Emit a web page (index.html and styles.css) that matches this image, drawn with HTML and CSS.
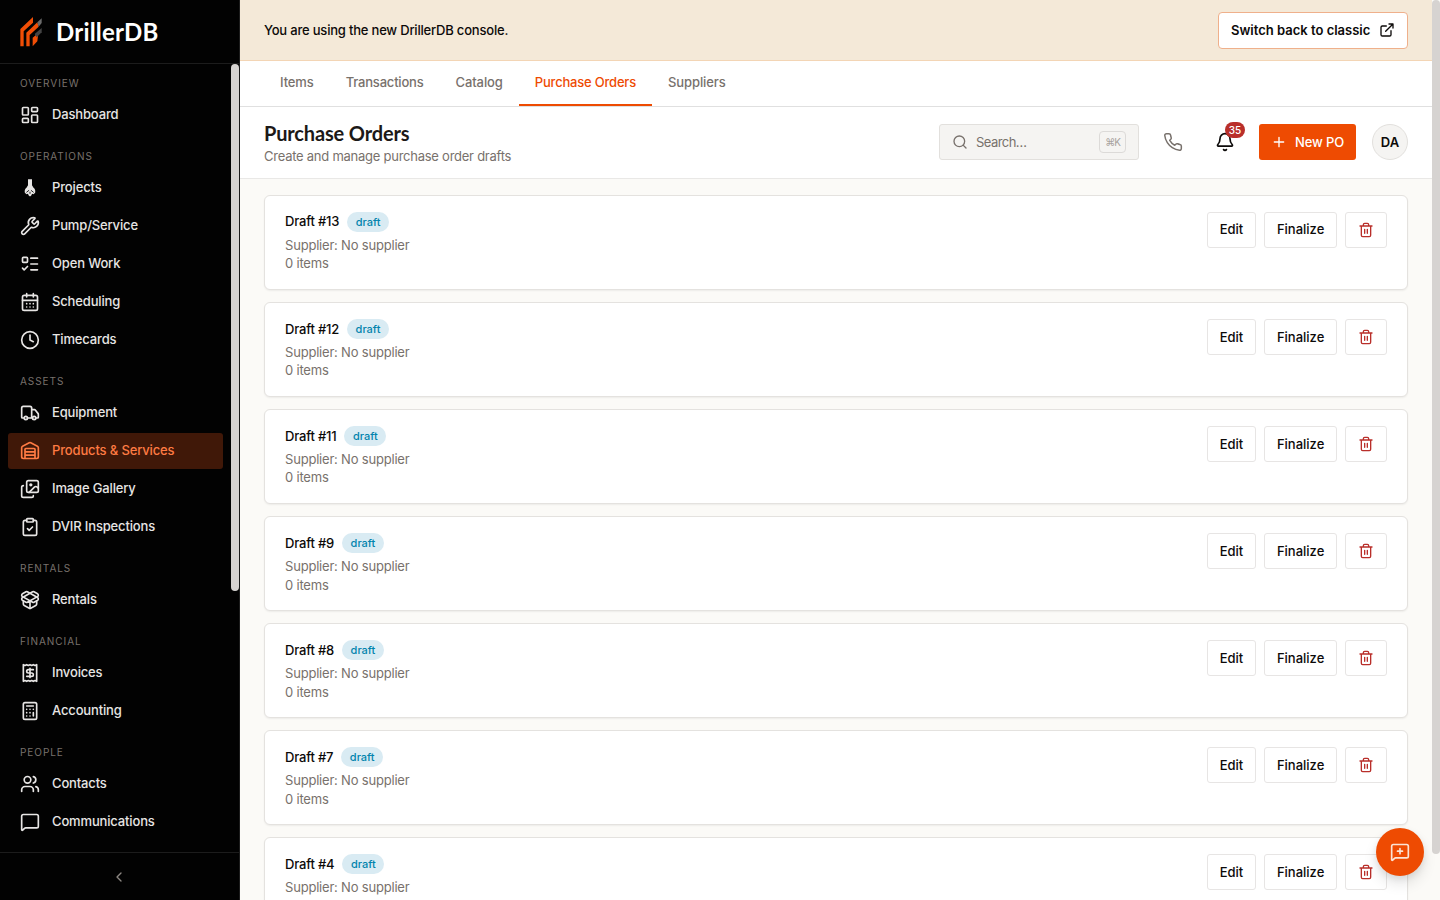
FILE: index.html
```html
<!DOCTYPE html>
<html lang="en">
<head>
<meta charset="utf-8">
<title>Purchase Orders - DrillerDB</title>
<link rel="stylesheet" href="styles.css">
</head>
<body>
<aside class="sidebar">
  <div class="brand">
    <svg class="logo" viewBox="0 0 66 90"><path fill="#f04e06" d="M1 88V36L39 0v17L11 43v45zM19 88V47l33-31 4 13-27 25v34zM38 88V62l17-14-3 25z"/><path fill="#6b6b6b" d="M52 16 65 4v14l-9 11z"/><path fill="#444" d="m44 51 21-18v13L50 61z"/></svg>
    <span class="brand-name">DrillerDB</span>
  </div>
  <div class="nav-wrap">
    <nav class="nav" id="nav"></nav>
    <div class="nav-thumb"></div>
  </div>
  <div class="collapse"><svg class="icon i16" viewBox="0 0 24 24"><path d="m15 18-6-6 6-6"/></svg></div>
</aside>
<main class="main">
  <div class="banner">
    <span class="banner-text">You are using the new DrillerDB console.</span>
    <button class="classic"><span>Switch back to classic</span><svg class="icon i16" viewBox="0 0 24 24"><path d="M15 3h6v6M10 14 21 3M18 13v6a2 2 0 0 1-2 2H5a2 2 0 0 1-2-2V8a2 2 0 0 1 2-2h6"/></svg></button>
  </div>
  <div class="tabs">
    <a class="tab">Items</a><a class="tab">Transactions</a><a class="tab">Catalog</a><a class="tab active">Purchase Orders</a><a class="tab">Suppliers</a>
  </div>
  <header class="header">
    <div class="heading"><h1>Purchase Orders</h1><p>Create and manage purchase order drafts</p></div>
    <div class="tools">
      <div class="search"><svg class="icon i16" viewBox="0 0 24 24"><circle cx="11" cy="11" r="8"/><path d="m21 21-4.3-4.3"/></svg><span class="search-text">Search…</span><kbd>⌘K</kbd></div>
      <div class="phone"><svg class="icon i20" viewBox="0 0 24 24"><path d="M22 16.92v3a2 2 0 0 1-2.18 2 19.79 19.79 0 0 1-8.63-3.07 19.5 19.5 0 0 1-6-6 19.79 19.79 0 0 1-3.07-8.67A2 2 0 0 1 4.11 2h3a2 2 0 0 1 2 1.72 12.84 12.84 0 0 0 .7 2.81 2 2 0 0 1-.45 2.11L8.09 9.91a16 16 0 0 0 6 6l1.27-1.27a2 2 0 0 1 2.11-.45 12.84 12.84 0 0 0 2.81.7A2 2 0 0 1 22 16.92z"/></svg></div>
      <div class="bell"><svg class="icon i20" viewBox="0 0 24 24"><path d="M10.268 21a2 2 0 0 0 3.464 0M3.262 15.326A1 1 0 0 0 4 17h16a1 1 0 0 0 .74-1.673C19.41 13.956 18 12.499 18 8A6 6 0 0 0 6 8c0 4.499-1.411 5.956-2.738 7.326"/></svg><span class="count">35</span></div>
      <button class="new-po"><svg class="icon i16" viewBox="0 0 24 24"><path d="M5 12h14M12 5v14"/></svg><span>New PO</span></button>
      <div class="avatar">DA</div>
    </div>
  </header>
  <section class="list" id="list"></section>
  <div class="page-thumb"></div>
  <button class="fab"><svg class="icon i20" viewBox="0 0 24 24"><path d="M22 17a2 2 0 0 1-2 2H6.828a2 2 0 0 0-1.414.586l-2.202 2.202A.71.71 0 0 1 2 21.286V5a2 2 0 0 1 2-2h16a2 2 0 0 1 2 2zM12 8v6M9 11h6"/></svg></button>
</main>
<script src="app.js"></script>
</body>
</html>
```
FILE: styles.css
```css
* { box-sizing: border-box; }
body { margin: 0; height: 900px; display: flex; overflow: hidden; font: 500 13px/18.57px Inter, "Liberation Sans", sans-serif; color: #0c0a09; background: #fff; }
button { font: inherit; color: inherit; margin: 0; }
.icon { fill: none; stroke: currentColor; stroke-width: 2; stroke-linecap: round; stroke-linejoin: round; flex: none; display: block; }
.i16 { width: 16px; height: 16px; }
.i20 { width: 20px; height: 20px; }

.sidebar { width: 240px; height: 900px; flex: none; background: #020202; border-right: 1px solid #1c1c1c; display: flex; flex-direction: column; color: #e7e5e4; }
.brand { height: 64px; flex: none; border-bottom: 1px solid #1c1c1c; display: flex; align-items: center; gap: 14px; padding-left: 20px; }
.logo { width: 22px; height: 30px; }
.brand-name { font: 700 24px/30px Lato, sans-serif; color: #fff; letter-spacing: .2px; }
.nav-wrap { flex: 1; min-height: 0; display: flex; overflow: hidden; }
.nav { flex: 1; padding: 12px 8px 0; overflow: hidden; display: flex; flex-direction: column; gap: 16px; }
.nav-thumb { width: 8px; height: 527px; border-radius: 4px; background: #d6d3d1; }
.group { display: flex; flex-direction: column; gap: 2px; }
.group-label { height: 15px; margin: 0 12px 4px; font-size: 10px; line-height: 15px; font-weight: 400; letter-spacing: .95px; color: #78716c; }
.nav-item { height: 36px; flex: none; display: flex; align-items: center; gap: 12px; padding: 0 12px; border-radius: 3px; letter-spacing: -.15px; }
.nav-item span { padding-bottom: 1px; }
.nav-item.active { background: #401808; color: #ff7b43; }
.nav-item .solid { fill: currentColor; stroke: none; }
.collapse { height: 48px; flex: none; border-top: 1px solid #1c1c1c; display: flex; align-items: center; justify-content: center; padding: 0 1px 0 0; color: #8c8782; }

.main { width: 1200px; height: 900px; display: flex; flex-direction: column; position: relative; background: #fbfaf7; }
.banner { height: 61.4px; width: 1192px; flex: none; background: #f4e9d8; border-bottom: 1px solid #f3d5b5; display: flex; align-items: center; justify-content: space-between; padding: 0 24px; }
.banner-text { letter-spacing: -.2px; }
.classic { height: 37px; width: 190px; border: 1px solid #efb08b; border-radius: 4px; background: #fff; display: flex; align-items: center; justify-content: space-between; padding: 0 12px; font-weight: 600; white-space: nowrap; }
.tabs { height: 45.6px; width: 1192px; flex: none; background: #fff; border-bottom: 1px solid #e0e0e0; display: flex; padding: 0 24px; color: #78716c; letter-spacing: -.1px; }
.tab { padding: 11.4px 16px 0; border-bottom: 2px solid transparent; height: 44.6px; }
.tab:nth-child(2) { letter-spacing: -.2px; }
.tab.active { color: #ee4b02; border-color: #ee4b02; letter-spacing: -.2px; }
.header { height: 71.7px; width: 1192px; flex: none; background: #fff; border-bottom: 1px solid #e9e8e6; display: flex; justify-content: space-between; align-items: center; padding: 0 24px; }
.heading { padding-top: 1px; }
h1 { margin: 0; font: 700 20px/25px Lato, sans-serif; color: #1c1917; letter-spacing: -.15px; }
.heading p { margin: 0; font-weight: 400; color: #78716c; letter-spacing: -.25px; padding-top: 1px; }
.tools { display: flex; align-items: center; }
.search { width: 200px; height: 36px; background: #f5f4f2; border: 1px solid #e2e0dd; border-radius: 3px; display: flex; align-items: center; padding: 0 12px; color: #78716c; font-weight: 400; }
.search-text { margin-left: 8px; flex: 1; letter-spacing: -.55px; }
kbd { width: 27px; height: 22px; border: 1px solid #dcdad8; border-radius: 4px; font: 400 10px/20px Inter, "DejaVu Sans", sans-serif; letter-spacing: -1px; text-align: center; color: #a8a29e; }
.phone { margin-left: 24px; color: #78716c; }
.phone .icon { stroke-width: 1.8; }
.bell { margin-left: 32px; position: relative; }
.count { position: absolute; left: 10px; top: -10px; width: 20px; height: 16px; border-radius: 8px; background: #b92f2a; color: #fff; font-size: 10px; line-height: 16px; text-align: center; }
.new-po { margin-left: 24px; width: 97px; height: 36px; border: 0; border-radius: 3px; background: #ee4b02; color: #fff; display: flex; align-items: center; justify-content: space-between; padding: 0 12px; white-space: nowrap; letter-spacing: -.15px; }
.avatar { margin-left: 16px; width: 36px; height: 36px; border-radius: 50%; background: #f5f4f2; border: 1px solid #e2e0dd; text-align: center; line-height: 34px; font-weight: 600; }

.list { width: 1192px; flex: 1; min-height: 0; overflow: hidden; padding: 16px 24px 0; display: flex; flex-direction: column; gap: 12px; }
.card { height: 95.14px; flex: none; background: #fff; border: 1px solid #e4e2df; border-radius: 6px; box-shadow: 0 1px 2px rgba(0,0,0,.06); padding: 16px 20px; display: flex; justify-content: space-between; }
.title { display: flex; align-items: center; gap: 8px; height: 20px; margin-bottom: 4px; letter-spacing: -.2px; }
.badge { height: 20px; width: 42px; border-radius: 10px; background: #d9ebf3; color: #0284ad; font-size: 11px; line-height: 20px; text-align: center; letter-spacing: 0; }
.meta { color: #78716c; font-weight: 400; letter-spacing: -.2px; }
.actions { display: flex; gap: 8px; }
.btn { height: 36px; border: 1px solid #e7e5e4; border-radius: 3px; background: #fff; display: flex; align-items: center; justify-content: center; padding: 0; }
.edit { width: 49.5px; }
.finalize { width: 72.8px; }
.trash { width: 42px; color: #b92f2a; }

.page-thumb { position: absolute; right: 0; top: 0; width: 8px; height: 854px; border-radius: 4px; background: #d6d3d1; }
.fab { position: absolute; right: 16px; bottom: 24px; width: 48px; height: 48px; border: 0; border-radius: 50%; background: #ee4b02; color: #fbe3d5; display: flex; align-items: center; justify-content: center; padding: 0; box-shadow: 0 8px 14px rgba(0,0,0,.1), 0 3px 6px rgba(0,0,0,.08); }
```
FILE: app.js
```js
const icons = {
  dashboard: '<rect width="7" height="9" x="3" y="3" rx="1"/><rect width="7" height="5" x="14" y="3" rx="1"/><rect width="7" height="9" x="14" y="12" rx="1"/><rect width="7" height="5" x="3" y="16" rx="1"/>',
  drill: '<path class="solid" d="M9.6 1.500h4.800v7.200l1.600 2.800c2 1.500 2.700 3.500 2.200 6.300l-2 1.800-1.700-.6-1 2-1.500 1.200-1.500-1.200-1-2-1.700.6-2-1.800c-.5-2.800.2-4.800 2.200-6.300l1.600-2.800z"/><path d="m8 17 2.500-2M16 17l-2.500-2M12 17v1.500" stroke="#020202" stroke-width="1"/>',
  wrench: '<path d="M14.7 6.3a1 1 0 0 0 0 1.4l1.6 1.6a1 1 0 0 0 1.4 0l3.106-3.105c.32-.322.863-.22.983.218a6 6 0 0 1-8.259 7.057l-7.91 7.91a1 1 0 0 1-2.999-3l7.91-7.91a6 6 0 0 1 7.057-8.259c.438.12.54.662.219.984z"/>',
  todo: '<rect x="3" y="4" width="6" height="6" rx="1"/><path d="m3 17 2 2 4-4M13 5h8M13 12h8M13 19h8"/>',
  calendar: '<path d="M8 2v4M16 2v4M3 10h18M8 14h.01M12 14h.01M16 14h.01M8 18h.01M12 18h.01M16 18h.01"/><rect width="18" height="18" x="3" y="4" rx="2"/>',
  clock: '<circle cx="12" cy="12" r="10"/><path d="M12 6v6l4 2"/>',
  truck: '<path d="M14 18V6a2 2 0 0 0-2-2H4a2 2 0 0 0-2 2v11a1 1 0 0 0 1 1h2M15 18H9M19 18h2a1 1 0 0 0 1-1v-3.650a1 1 0 0 0-.22-.624l-3.480-4.350A1 1 0 0 0 17.520 8H14"/><circle cx="17" cy="18" r="2"/><circle cx="7" cy="18" r="2"/>',
  warehouse: '<path d="M18 21V10a1 1 0 0 0-1-1H7a1 1 0 0 0-1 1v11M22 19a2 2 0 0 1-2 2H4a2 2 0 0 1-2-2V8a2 2 0 0 1 1.132-1.803l7.950-3.974a2 2 0 0 1 1.837 0l7.948 3.974A2 2 0 0 1 22 8zM6 13h12M6 17h12"/>',
  images: '<path d="m22 11-1.296-1.296a2.400 2.400 0 0 0-3.408 0L11 16M4 8a2 2 0 0 0-2 2v10a2 2 0 0 0 2 2h10a2 2 0 0 0 2-2"/><circle cx="13" cy="7" r="1" fill="currentColor"/><rect x="8" y="2" width="14" height="14" rx="2"/>',
  clipboard: '<rect width="8" height="4" x="8" y="2" rx="1"/><path d="M16 4h2a2 2 0 0 1 2 2v14a2 2 0 0 1-2 2H6a2 2 0 0 1-2-2V6a2 2 0 0 1 2-2h2M9 14l2 2 4-4"/>',
  box: '<path d="M12 22v-9M15.170 2.210a1.670 1.670 0 0 1 1.630 0L21 4.570a1.930 1.930 0 0 1 0 3.360L8.820 14.790a1.655 1.655 0 0 1-1.640 0L3 12.430a1.930 1.930 0 0 1 0-3.360z"/><path d="M20 13v3.870a2.060 2.060 0 0 1-1.110 1.830l-6 3.080a1.930 1.930 0 0 1-1.780 0l-6-3.080A2.060 2.060 0 0 1 4 16.870V13"/><path d="M21 12.430a1.930 1.930 0 0 0 0-3.360L8.830 2.200a1.640 1.640 0 0 0-1.630 0L3 4.570a1.930 1.930 0 0 0 0 3.360l12.180 6.860a1.636 1.636 0 0 0 1.630 0z"/>',
  receipt: '<path d="M4 2v20l2-1 2 1 2-1 2 1 2-1 2 1 2-1 2 1V2l-2 1-2-1-2 1-2-1-2 1-2-1-2 1Z"/><path d="M16 8h-6a2 2 0 1 0 0 4h4a2 2 0 1 1 0 4H8M12 17.500v-11"/>',
  calculator: '<rect width="16" height="20" x="4" y="2" rx="2"/><path d="M8 6h8M16 14v4M16 10h.01M12 10h.01M8 10h.01M12 14h.01M8 14h.01M12 18h.01M8 18h.01"/>',
  users: '<path d="M16 21v-2a4 4 0 0 0-4-4H6a4 4 0 0 0-4 4v2"/><circle cx="9" cy="7" r="4"/><path d="M22 21v-2a4 4 0 0 0-3-3.870M16 3.130a4 4 0 0 1 0 7.750"/>',
  message: '<path d="M22 17a2 2 0 0 1-2 2H6.828a2 2 0 0 0-1.414.586l-2.202 2.202A.71.71 0 0 1 2 21.286V5a2 2 0 0 1 2-2h16a2 2 0 0 1 2 2z"/>',
  trash: '<path d="M10 11v6M14 11v6M19 6v14a2 2 0 0 1-2 2H7a2 2 0 0 1-2-2V6M3 6h18M8 6V4a2 2 0 0 1 2-2h4a2 2 0 0 1 2 2v2"/>'
};
const svg = (name, size) => `<svg class="icon ${size}" viewBox="0 0 24 24">${icons[name]}</svg>`;
const groups = [
  ['OVERVIEW', [['dashboard', 'Dashboard']]],
  ['OPERATIONS', [['drill', 'Projects'], ['wrench', 'Pump/Service'], ['todo', 'Open Work'], ['calendar', 'Scheduling'], ['clock', 'Timecards']]],
  ['ASSETS', [['truck', 'Equipment'], ['warehouse', 'Products &amp; Services'], ['images', 'Image Gallery'], ['clipboard', 'DVIR Inspections']]],
  ['RENTALS', [['box', 'Rentals']]],
  ['FINANCIAL', [['receipt', 'Invoices'], ['calculator', 'Accounting']]],
  ['PEOPLE', [['users', 'Contacts'], ['message', 'Communications']]]
];
document.getElementById('nav').innerHTML = groups.map(([label, items]) =>
  `<div class="group"><div class="group-label">${label}</div>${items.map(([icon, text]) =>
    `<a class="nav-item${icon === 'warehouse' ? ' active' : ''}">${svg(icon, 'i20')}<span>${text}</span></a>`).join('')}</div>`).join('');
document.getElementById('list').innerHTML = [13, 12, 11, 9, 8, 7, 4].map(n =>
  `<article class="card"><div><div class="title"><span class="name">Draft #${n}</span><span class="badge">draft</span></div><div class="meta">Supplier: No supplier</div>${n === 4 ? '' : '<div class="meta">0 items</div>'}</div>
  <div class="actions"><button class="btn edit">Edit</button><button class="btn finalize">Finalize</button><button class="btn trash">${svg('trash', 'i16')}</button></div></article>`).join('');
```
